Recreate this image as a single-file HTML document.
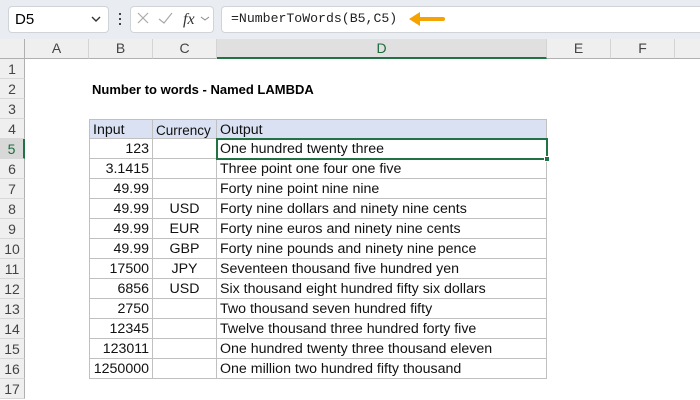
<!DOCTYPE html>
<html><head><style>
*{margin:0;padding:0;box-sizing:border-box}
body{width:700px;height:400px;overflow:hidden;background:#fff;font-family:"Liberation Sans",sans-serif;position:relative}
.abs{position:absolute}
.top{left:0;top:0;width:700px;height:39px;background:#e9edf1}
.box{background:#fff;border:1px solid #d0d4d8;border-radius:4px}
.hdr{top:39px;height:20px;background:#efefef;border-bottom:1px solid #b0b0b0;border-right:1px solid #d4d4d4;font-size:14px;color:#444;text-align:center;line-height:19px}
.rh{left:0;width:25px;height:20px;background:#efefef;border-right:1px solid #b0b0b0;border-bottom:1px solid #d8d8d8;font-size:14px;color:#444;text-align:center;line-height:20px}
.c{height:20px;border-right:1px solid #c0c0c0;border-bottom:1px solid #c0c0c0;font-size:14.2px;line-height:21px;padding:0 3px;white-space:nowrap;color:#111}
</style></head><body>
<div class="abs top"></div>
<div class="abs box" style="left:8px;top:6px;width:101px;height:27px"></div>
<div class="abs" style="left:15px;top:11px;font-size:15px">D5</div>
<svg class="abs" style="left:90px;top:15px" width="12" height="8"><path d="M2 2 L6 6 L10 2" stroke="#333" stroke-width="1.4" fill="none"/></svg>
<div class="abs" style="left:119px;top:13px;width:2px;height:2px;background:#444;box-shadow:0 5px #444,0 10px #444"></div>
<div class="abs box" style="left:130px;top:6px;width:84px;height:27px"></div>
<svg class="abs" style="left:135px;top:10px" width="78" height="20"><path d="M3 3 L13 13 M13 3 L3 13" stroke="#aaa" stroke-width="1.2"/><path d="M24 9 L29 13 L37 3" stroke="#aaa" stroke-width="1.2" fill="none"/>
<text x="48" y="14" font-family="Liberation Serif" font-style="italic" font-size="16" fill="#333">fx</text><path d="M66 7 L70 10 L74 7" stroke="#888" stroke-width="1" fill="none"/></svg>
<div class="abs box" style="left:221px;top:6px;width:490px;height:27px"></div>
<div class="abs" style="left:231px;top:11px;font-family:'Liberation Mono',monospace;font-size:13.2px;color:#222">=NumberToWords(B5,C5)</div>
<svg class="abs" style="left:407px;top:11px" width="40" height="16"><path d="M10 8 L36 8" stroke="#f5a300" stroke-width="4" stroke-linecap="round"/><path d="M2 8 L13 1 L13 15 Z" fill="#f5a300"/></svg>
<div class="abs" style="left:0;top:39px;width:25px;height:20px;background:#efefef;border-right:1px solid #b0b0b0;border-bottom:1px solid #b0b0b0"></div>
<div class="abs hdr" style="left:25px;width:64px">A</div>
<div class="abs hdr" style="left:89px;width:64px">B</div>
<div class="abs hdr" style="left:153px;width:64px">C</div>
<div class="abs hdr" style="left:217px;width:330px;background:#e0e0e0;border-bottom:2px solid #217346;color:#1e6b3c">D</div>
<div class="abs hdr" style="left:547px;width:64px">E</div>
<div class="abs hdr" style="left:611px;width:64px">F</div>
<div class="abs hdr" style="left:675px;width:30px"></div>
<div id="rows"></div>
<div class="abs" style="left:92px;top:82px;font-size:13px;font-weight:bold">Number to words - Named LAMBDA</div>
<script>
var d=[["123","","One hundred twenty three"],["3.1415","","Three point one four one five"],["49.99","","Forty nine point nine nine"],["49.99","USD","Forty nine dollars and ninety nine cents"],["49.99","EUR","Forty nine euros and ninety nine cents"],["49.99","GBP","Forty nine pounds and ninety nine pence"],["17500","JPY","Seventeen thousand five hundred yen"],["6856","USD","Six thousand eight hundred fifty six dollars"],["2750","","Two thousand seven hundred fifty"],["12345","","Twelve thousand three hundred forty five"],["123011","","One hundred twenty three thousand eleven"],["1250000","","One million two hundred fifty thousand"]];
var h="";
for(var r=1;r<=17;r++){var t=59+(r-1)*20;
h+='<div class="abs rh" style="top:'+t+'px;'+(r==5?'background:#d8d8d8;color:#1e6b3c;border-right:2px solid #217346':'')+'">'+r+'</div>';}
h+='<div class="abs c" style="left:89px;top:119px;width:64px;background:#d9e1f2;border-top:1px solid #c0c0c0;border-left:1px solid #c0c0c0">Input</div>';
h+='<div class="abs c" style="left:153px;top:119px;width:64px;background:#d9e1f2;border-top:1px solid #c0c0c0;font-size:13.5px">Currency</div>';
h+='<div class="abs c" style="left:217px;top:119px;width:330px;background:#d9e1f2;border-top:1px solid #c0c0c0">Output</div>';
for(var i=0;i<d.length;i++){var t=139+i*20;
h+='<div class="abs c" style="left:89px;top:'+t+'px;width:64px;text-align:right;border-left:1px solid #c0c0c0">'+d[i][0]+'</div>';
h+='<div class="abs c" style="left:153px;top:'+t+'px;width:64px;text-align:center">'+d[i][1]+'</div>';
h+='<div class="abs c" style="left:217px;top:'+t+'px;width:330px">'+d[i][2]+'</div>';}
h+='<div class="abs" style="left:216px;top:138px;width:332px;height:22px;border:2px solid #217346"></div>';
h+='<div class="abs" style="left:544px;top:156px;width:6px;height:6px;background:#217346;border:1px solid #fff"></div>';
document.getElementById("rows").innerHTML=h;
</script>
</body></html>
